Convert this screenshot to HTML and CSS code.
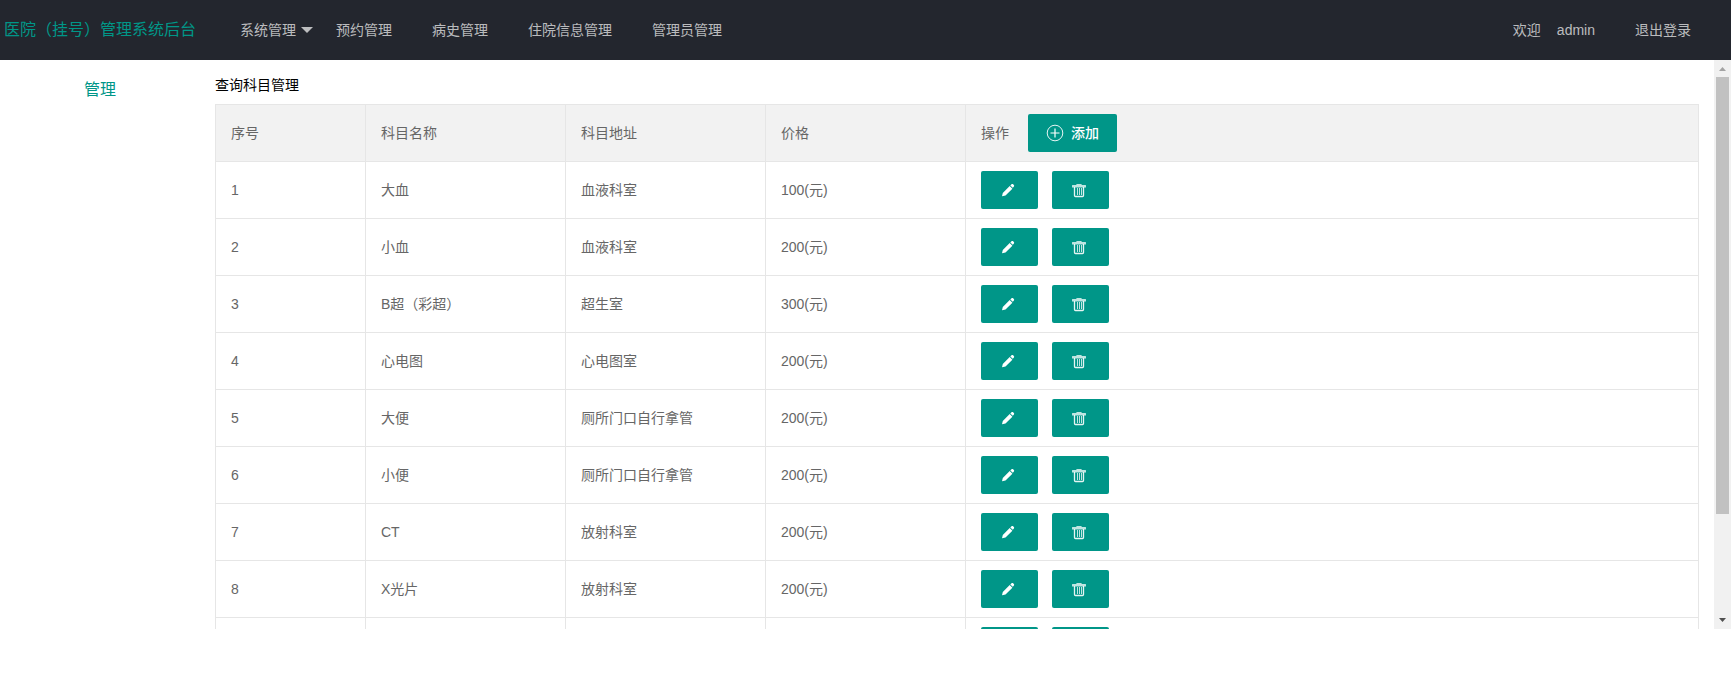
FILE: index.html
```html
<!DOCTYPE html>
<html lang="zh-CN">
<head>
<meta charset="utf-8">
<title>医院（挂号）管理系统后台</title>
<link rel="stylesheet" href="styles.css">
</head>
<body>
<svg class="sprite" aria-hidden="true">
  <symbol id="icon-edit" viewBox="0 0 18 18"><path d="M3 15.200l.8-3.300 6.900-6.900 2.700 2.700-6.900 6.700zM11.300 4.400l1-1c.6-.6 1.400-.6 2 0l.4.4c.6.6.6 1.400 0 2l-.9.9z" fill="currentColor"/></symbol>
  <symbol id="icon-delete" viewBox="0 0 18 18"><path d="M2 4.500q0-.5.5-.5H6l.8-1h4.400l.8 1h3.500q.5 0 .5.500V6.500H2z" fill="currentColor" opacity=".75"/><path d="M4.500 6v8.500q0 1 1 1h7q1 0 1-1V6" fill="none" stroke="currentColor" stroke-width="1.300" opacity=".9"/><path d="M7.500 7v7M9.500 7v7M11.500 7v7" fill="none" stroke="currentColor" opacity=".75"/></symbol>
  <symbol id="icon-add" viewBox="0 0 18 18"><path d="M9 4.500v9M4.500 9h9" fill="none" stroke="currentColor" stroke-width="1.200"/><circle cx="9" cy="9" r="7.800" fill="none" stroke="currentColor" stroke-width=".9"/></symbol>
</svg>
<div class="layout">
  <header class="header">
    <a class="logo" href="#">医院（挂号）管理系统后台</a>
    <nav class="nav">
      <a class="nav-item has-more" href="#">系统管理<span class="caret"></span></a>
      <a class="nav-item" href="#">预约管理</a>
      <a class="nav-item" href="#">病史管理</a>
      <a class="nav-item" href="#">住院信息管理</a>
      <a class="nav-item" href="#">管理员管理</a>
    </nav>
    <div class="nav account">
      <a class="nav-item user" href="#"><span>欢迎</span><span>admin</span></a>
      <a class="nav-item" href="#">退出登录</a>
    </div>
  </header>
  <div class="body">
    <aside class="side"><h2 class="side-title">管理</h2></aside>
    <main class="content">
      <h1 class="title">查询科目管理</h1>
      <table class="table">
        <colgroup><col class="col-index"><col class="col-field"><col class="col-field"><col class="col-field"><col></colgroup>
        <thead>
          <tr><th>序号</th><th>科目名称</th><th>科目地址</th><th>价格</th><th><div class="actions head-actions"><span>操作</span><button class="btn btn-add" type="button"><svg class="icon"><use href="#icon-add"/></svg><span>添加</span></button></div></th></tr>
        </thead>
        <tbody>
          <tr><td>1</td><td>大血</td><td>血液科室</td><td>100(元)</td><td><div class="actions"><button class="btn" type="button" aria-label="编辑"><svg class="icon"><use href="#icon-edit"/></svg></button><button class="btn" type="button" aria-label="删除"><svg class="icon"><use href="#icon-delete"/></svg></button></div></td></tr>
          <tr><td>2</td><td>小血</td><td>血液科室</td><td>200(元)</td><td><div class="actions"><button class="btn" type="button" aria-label="编辑"><svg class="icon"><use href="#icon-edit"/></svg></button><button class="btn" type="button" aria-label="删除"><svg class="icon"><use href="#icon-delete"/></svg></button></div></td></tr>
          <tr><td>3</td><td>B超（彩超）</td><td>超生室</td><td>300(元)</td><td><div class="actions"><button class="btn" type="button" aria-label="编辑"><svg class="icon"><use href="#icon-edit"/></svg></button><button class="btn" type="button" aria-label="删除"><svg class="icon"><use href="#icon-delete"/></svg></button></div></td></tr>
          <tr><td>4</td><td>心电图</td><td>心电图室</td><td>200(元)</td><td><div class="actions"><button class="btn" type="button" aria-label="编辑"><svg class="icon"><use href="#icon-edit"/></svg></button><button class="btn" type="button" aria-label="删除"><svg class="icon"><use href="#icon-delete"/></svg></button></div></td></tr>
          <tr><td>5</td><td>大便</td><td>厕所门口自行拿管</td><td>200(元)</td><td><div class="actions"><button class="btn" type="button" aria-label="编辑"><svg class="icon"><use href="#icon-edit"/></svg></button><button class="btn" type="button" aria-label="删除"><svg class="icon"><use href="#icon-delete"/></svg></button></div></td></tr>
          <tr><td>6</td><td>小便</td><td>厕所门口自行拿管</td><td>200(元)</td><td><div class="actions"><button class="btn" type="button" aria-label="编辑"><svg class="icon"><use href="#icon-edit"/></svg></button><button class="btn" type="button" aria-label="删除"><svg class="icon"><use href="#icon-delete"/></svg></button></div></td></tr>
          <tr><td>7</td><td>CT</td><td>放射科室</td><td>200(元)</td><td><div class="actions"><button class="btn" type="button" aria-label="编辑"><svg class="icon"><use href="#icon-edit"/></svg></button><button class="btn" type="button" aria-label="删除"><svg class="icon"><use href="#icon-delete"/></svg></button></div></td></tr>
          <tr><td>8</td><td>X光片</td><td>放射科室</td><td>200(元)</td><td><div class="actions"><button class="btn" type="button" aria-label="编辑"><svg class="icon"><use href="#icon-edit"/></svg></button><button class="btn" type="button" aria-label="删除"><svg class="icon"><use href="#icon-delete"/></svg></button></div></td></tr>
          <tr><td></td><td></td><td></td><td></td><td><div class="actions"><button class="btn" type="button" aria-label="编辑"></button><button class="btn" type="button" aria-label="删除"></button></div></td></tr>
        </tbody>
      </table>
    </main>
    <div class="scrollbar" aria-hidden="true">
      <svg class="arrow arrow-up" viewBox="0 0 17 17"><path d="M5 11h7L8.500 7z" fill="currentColor"/></svg>
      <div class="track"><div class="thumb"></div></div>
      <svg class="arrow arrow-down" viewBox="0 0 17 17"><path d="M5 6h7l-3.500 4z" fill="currentColor"/></svg>
    </div>
  </div>
  <footer class="footer"></footer>
</div>
</body>
</html>
```
FILE: styles.css
```css
* { box-sizing: border-box; }

body {
  margin: 0;
  background: #fff;
  color: #000;
  font: 14px/24px "Liberation Sans", "Noto Sans CJK SC", sans-serif;
}

h1, h2 { margin: 0; font-weight: 400; }
a { color: inherit; text-decoration: none; }
.sprite { position: absolute; width: 0; height: 0; }

.layout { display: flex; flex-direction: column; height: 100vh; }

.header {
  display: flex;
  flex: none;
  height: 60px;
  line-height: 60px;
  background: #23262e;
  color: rgba(255, 255, 255, .7);
}
.logo { width: 200px; padding-left: 4px; color: #009688; font-size: 16px; white-space: nowrap; }
.nav { display: flex; padding: 0 20px; }
.account { margin-left: auto; }
.nav-item { padding: 0 20px; white-space: nowrap; }
.has-more { display: flex; align-items: center; gap: 5px; padding-right: 3px; }
.caret {
  width: 12px;
  border: 6px solid transparent;
  border-top-color: currentColor;
  border-bottom: 0;
}
.user { display: flex; gap: 16px; }

.body { display: flex; flex: 1; min-height: 0; }
.side { flex: none; width: 200px; padding-top: 18px; }
.side-title { color: #009688; font-size: 16px; line-height: 24px; text-align: center; }
.content { flex: 1; min-width: 0; padding: 13px 15px; overflow: hidden; }
.title { margin-bottom: 7px; font-size: 14px; line-height: 24px; }

.table { width: 100%; border-collapse: collapse; table-layout: fixed; color: #666; }
.col-index { width: 150px; }
.col-field { width: 200px; }
.table th, .table td {
  height: 57px;
  padding: 9px 15px;
  border: 1px solid #e6e6e6;
  font-weight: 400;
  line-height: 20px;
  text-align: left;
}
.table th { background: #f2f2f2; }

.actions { display: flex; align-items: center; gap: 14px; }
.head-actions { gap: 19px; }
.btn {
  display: flex;
  align-items: center;
  width: 57px;
  height: 38px;
  padding: 0 18px;
  border: 0;
  border-radius: 2px;
  background: #009688;
  color: #fff;
  font: inherit;
  white-space: nowrap;
}
.btn-add { gap: 7px; width: auto; font-weight: 500; }
.icon { flex: none; width: 18px; height: 18px; }

.scrollbar { display: flex; flex: none; flex-direction: column; width: 17px; background: #f1f1f1; }
.arrow { flex: none; width: 17px; height: 17px; }
.arrow-up { color: #a3a3a3; }
.arrow-down { color: #505050; }
.track { flex: 1; padding: 0 2px; }
.thumb { height: calc(100% * 437 / 535); background: #c1c1c1; }

.footer { flex: none; height: 44px; }
```
